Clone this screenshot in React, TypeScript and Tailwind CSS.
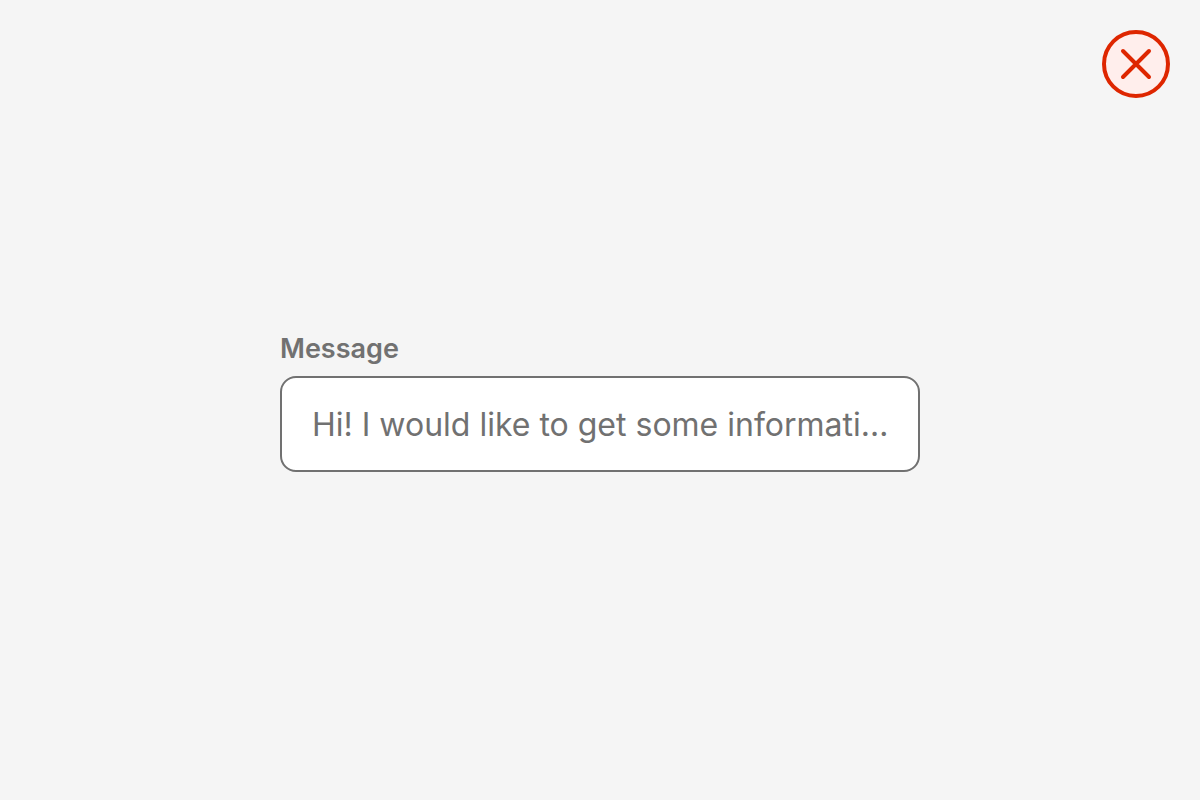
import { useState } from 'react'

export default function App() {
    const [message, setMessage] = useState('')

    return (
        <main className="relative flex min-h-screen items-center justify-center bg-[#f5f5f5] px-6 font-['Inter',Arial,sans-serif]">
            <div className="flex w-full max-w-[640px] flex-col gap-1.5">
                <label htmlFor="message" className="text-[27px] leading-[42px] font-semibold text-[#717171]">
                    Message
                </label>
                <input
                    id="message"
                    type="text"
                    value={message}
                    onChange={(e) => setMessage(e.target.value)}
                    placeholder="Hi! I would like to get some information about this"
                    className="h-24 w-full rounded-2xl border-2 border-[#717171] bg-white pr-6 pl-[30px] text-[32px] text-ellipsis text-[#222222] outline-none placeholder:text-[#717171]"
                />
            </div>

            {/* Status badge */}
            <svg
                role="img"
                aria-label="Incorrect"
                viewBox="0 0 68 68"
                className="absolute top-[30px] right-[30px] size-[68px]"
                fill="none"
                stroke="#de2600"
                strokeWidth="4"
                strokeLinecap="round"
            >
                <circle cx="34" cy="34" r="32" fill="#ffeeec" />
                <path d="M21 21l26 26M47 21L21 47" />
            </svg>
        </main>
    )
}
